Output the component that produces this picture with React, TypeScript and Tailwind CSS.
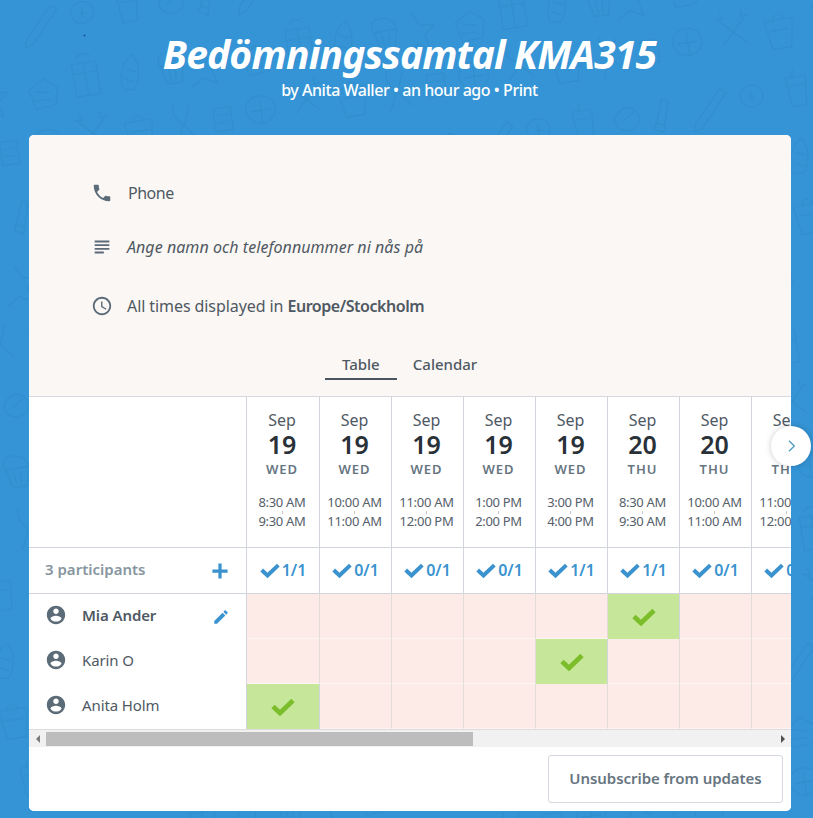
const font = { fontFamily: '"Noto Sans", "Open Sans", sans-serif' };

type Slot = { month: string; day: string; dow: string; from: string; to: string; count: string };

const slots: Slot[] = [
  { month: 'Sep', day: '19', dow: 'WED', from: '8:30 AM', to: '9:30 AM', count: '1/1' },
  { month: 'Sep', day: '19', dow: 'WED', from: '10:00 AM', to: '11:00 AM', count: '0/1' },
  { month: 'Sep', day: '19', dow: 'WED', from: '11:00 AM', to: '12:00 PM', count: '0/1' },
  { month: 'Sep', day: '19', dow: 'WED', from: '1:00 PM', to: '2:00 PM', count: '0/1' },
  { month: 'Sep', day: '19', dow: 'WED', from: '3:00 PM', to: '4:00 PM', count: '1/1' },
  { month: 'Sep', day: '20', dow: 'THU', from: '8:30 AM', to: '9:30 AM', count: '1/1' },
  { month: 'Sep', day: '20', dow: 'THU', from: '10:00 AM', to: '11:00 AM', count: '0/1' },
  { month: 'Sep', day: '20', dow: 'THU', from: '11:00 AM', to: '12:00 PM', count: '0/1' },
];

const participants = [
  { name: 'Mia Ander', yes: 5, me: true },
  { name: 'Karin O', yes: 4, me: false },
  { name: 'Anita Holm', yes: 0, me: false },
];

// the first slot column is one pixel wider than the rest
const colWidth = (i: number) => (i === 0 ? 'w-[73px]' : 'w-[72px]');

function Icon({ d, className }: { d: string; className: string }) {
  return (
    <svg viewBox="0 0 24 24" fill="currentColor" className={className}>
      <path d={d} />
    </svg>
  );
}

function Check({ className }: { className: string }) {
  return (
    <svg viewBox="0 0 24 18" fill="none" stroke="currentColor" strokeWidth="4.8" className={className}>
      <path d="M2 8.5l7 6.5L22 2.5" />
    </svg>
  );
}

// faint hand drawn doodles behind the page
function Doodles() {
  return (
    <svg className="absolute inset-0 w-full h-full" aria-hidden="true">
      <defs>
        <pattern id="doodles" width="300" height="260" patternUnits="userSpaceOnUse" patternTransform="rotate(-9) scale(0.72)">
          <g fill="none" stroke="#2c86c4" strokeWidth="1.5" strokeLinecap="round" strokeLinejoin="round" opacity="0.55">
            <path d="M28 60l40-42 8 7-40 43-12 4z" />
            <path d="M98 24c10-8 26-4 28 8s-10 20-20 18-16-18-8-26zM106 36h10M110 28v14" />
            <path d="M160 18h28l-4 40h-20zM164 30h20M172 8l-3 10" />
            <path d="M225 28c12-10 30 2 26 16-3 12-22 16-30 6s-3-16 4-22zM228 42l16-10" />
            <path d="M270 60l16-40 8 4-12 42zM274 52l10 4" />
            <path d="M20 130l22-12 18 14-6 24-28 2zM30 134l18 4M26 146l22 2" />
            <path d="M84 104h34v46H84zM84 118h34M101 104v46M92 96c4-6 14-6 18 0" />
            <path d="M150 150c-6-22 8-42 20-46 8 14 6 36-6 48zM158 122l12 6M154 136l12 6" />
            <path d="M208 110c14-6 30 2 30 16H204c-2-6 0-12 4-16zM206 126l6 26h20l6-26M216 132l2 16M226 132l-2 16" />
            <path d="M262 108l8 18 20 2-15 13 5 20-18-10-17 10" />
            <path d="M16 196c10-12 30-10 36 2s-2 28-18 28-26-18-18-30zM20 208h28M34 194v32" />
            <path d="M82 186l34 34M116 186l-34 34M76 182l10 2-2-10M122 182l-10 2 2-10" />
            <path d="M144 196h38v6l-6 34h-26l-6-34zM150 210h26M156 196c0-10 14-10 14 0" />
            <path d="M214 182c-4 14 4 22 10 30l-12 26M236 186l-10 26 16 22" />
            <path d="M268 196h24v32h-24zM272 206h16M272 216h16" />
          </g>
        </pattern>
      </defs>
      <rect width="100%" height="100%" fill="url(#doodles)" />
      <circle cx="84.5" cy="35.5" r="1" fill="#1f4f9a" />
    </svg>
  );
}

export default function App() {
  return (
    <div className="relative h-[818px] overflow-hidden bg-[#3494d5] text-[#4f5963]" style={font}>
      <Doodles />
      <div className="relative">
        <div className="h-[135px] pt-[29px] pl-[6px] text-center text-white">
          <h1 className="text-[39px] leading-[50px] font-bold italic tracking-[-0.85px]">Bedömningssamtal KMA315</h1>
          <p className="text-[16px] leading-[22px] font-medium tracking-[-0.46px]">
            by Anita Waller • an hour ago • Print
          </p>
        </div>

        <div className="relative ml-[29px] w-[762px] rounded-[5px] bg-white">
          <div className="h-[262px] rounded-t-[5px] bg-[#fbf7f4] border-b border-[#d8d9e0]">
            <div className="pl-[62px] pt-[46px] text-[16px]">
              <div className="flex items-center gap-[15px] h-[24px]">
                <Icon className="w-[22px] h-[22px] text-[#5b6b78]" d="M6.62 10.79c1.44 2.83 3.76 5.14 6.59 6.59l2.2-2.2c.27-.27.67-.36 1.02-.24 1.12.37 2.33.57 3.57.57.55 0 1 .45 1 1V20c0 .55-.45 1-1 1-9.39 0-17-7.61-17-17 0-.55.45-1 1-1h3.5c.55 0 1 .45 1 1 0 1.25.2 2.45.57 3.57.11.35.03.74-.25 1.02l-2.2 2.2z" />
                <span className="tracking-[-0.5px]">Phone</span>
              </div>
              <div className="mt-[30px] flex items-center gap-[14px] h-[24px]">
                <Icon className="w-[22px] h-[22px] text-[#5b6b78]" d="M14 17H4v2h10v-2zm6-8H4v2h16V9zM4 15h16v-2H4v2zM4 5v2h16V5H4z" />
                <span className="italic tracking-[0.05px]">Ange namn och telefonnummer ni nås på</span>
              </div>
              <div className="mt-[35px] flex items-center gap-[14px] h-[24px]">
                <Icon className="w-[22px] h-[22px] text-[#5b6b78]" d="M11.99 2C6.47 2 2 6.48 2 12s4.47 10 9.99 10C17.52 22 22 17.52 22 12S17.52 2 11.99 2zM12 20c-4.42 0-8-3.58-8-8s3.58-8 8-8 8 3.58 8 8-3.58 8-8 8zM12.5 7H11v6l5.25 3.15.75-1.23-4.5-2.67z" />
                <span className="tracking-[-0.08px]">
                  All times displayed in <b className="font-semibold tracking-[-0.45px]">Europe/Stockholm</b>
                </span>
              </div>
            </div>
            <div className="mt-[35px] flex justify-center text-[15px] font-medium pr-[18px]">
              <span className="w-[72px] h-[27px] text-center border-b-2 border-[#4a5560]">Table</span>
              <span className="ml-[16px]">Calendar</span>
            </div>
          </div>

          <div className="overflow-hidden">
            <div className="flex h-[150px] w-max">
              <div className="w-[218px] shrink-0 border-r border-[#d3d5dc]" />
              {slots.map((s, i) => (
                <div key={i} className={`${colWidth(i)} shrink-0 border-r border-[#d3d5dc] pt-[13px] pr-[2px] text-center`}>
                  <div className="text-[16px] leading-[20px] text-[#4f5963]">{s.month}</div>
                  <div className="-mt-[1px] mb-[1px] text-[25px] leading-[30px] font-semibold text-[#2a3138]">{s.day}</div>
                  <div className="text-[13px] leading-[18px] font-semibold tracking-[1px] text-[#66757f]">{s.dow}</div>
                  <div className="mt-[15px] text-[13px] leading-[19px] tracking-[-0.3px] text-[#55606a]">
                    <div>{s.from}</div>
                    <div className="mx-auto -my-[1.5px] h-[3px] w-px bg-[#c2c6ca]" />
                    <div>{s.to}</div>
                  </div>
                </div>
              ))}
            </div>

            <div className="flex h-[47px] w-max border-y border-[#d3d5dc]">
              <div className="w-[218px] shrink-0 border-r border-[#d3d5dc] pl-[16px] pr-[13px] flex items-center justify-between">
                <span className="-mt-[2px] text-[15px] font-semibold text-[#8796a0]">3 participants</span>
                <Icon className="w-[26px] h-[26px] text-[#3a93cf]" d="M19 13.5h-5.5V19h-3v-5.5H5v-3h5.5V5h3v5.5H19z" />
              </div>
              {slots.map((s, i) => (
                <div key={i} className={`${colWidth(i)} shrink-0 border-r border-[#d3d5dc] flex items-center justify-center gap-[2px] text-[#3a93cf]`}>
                  <Check className="w-[20px] h-[15px]" />
                  <span className="-mt-[2px] text-[16px] font-semibold">{s.count}</span>
                </div>
              ))}
            </div>

            {participants.map((p) => (
              <div key={p.name} className="flex h-[45px] w-max">
                <div className="w-[218px] shrink-0 border-r border-[#d3d5dc] pl-[16px] pr-[16px] flex items-center">
                  <Icon className="w-[22px] h-[22px] text-[#5b6b78] -mt-[3px]" d="M12 2C6.48 2 2 6.48 2 12s4.48 10 10 10 10-4.48 10-10S17.52 2 12 2zm0 3c1.66 0 3 1.34 3 3s-1.34 3-3 3-3-1.34-3-3 1.34-3 3-3zm0 14.2c-2.5 0-4.71-1.28-6-3.22.03-1.99 4-3.08 6-3.08 1.99 0 5.97 1.09 6 3.08-1.29 1.94-3.5 3.22-6 3.22z" />
                  <span className={`-mt-[2px] ml-[15px] text-[15px] tracking-[-0.1px] ${p.me ? 'font-semibold' : ''}`}>{p.name}</span>
                  {p.me && (
                    <Icon className="ml-auto w-[18px] h-[18px] text-[#3a93cf]" d="M3 17.25V21h3.75L17.81 9.94l-3.75-3.75L3 17.25zM20.71 7.04c.39-.39.39-1.02 0-1.41l-2.34-2.34c-.39-.39-1.02-.39-1.41 0l-1.83 1.83 3.75 3.75 1.83-1.83z" />
                  )}
                </div>
                {slots.map((s, i) =>
                  i === p.yes ? (
                    <div key={s.from + i} className={`${colWidth(i)} shrink-0 bg-[#c6e799] border-r border-[#d3d5dc] flex items-center justify-center text-[#7bbd2a]`}>
                      <Check className="w-[24px] h-[18px]" />
                    </div>
                  ) : (
                    <div key={s.from + i} className={`${colWidth(i)} shrink-0 bg-[#fcebe7] border-r border-b border-[#e3dbd8] border-b-[#fdf5f2]`} />
                  )
                )}
              </div>
            ))}
          </div>

          <div className="flex h-[18px] items-center bg-[#f1f1f1] border-t border-[#dcdcdc]">
            <div className="w-[17px] flex justify-center">
              <span className="border-y-[4px] border-r-[4px] border-y-transparent border-r-[#7b7b7b]" />
            </div>
            <div className="h-[14px] w-[427px] bg-[#bdbdbd]" />
            <div className="ml-auto w-[17px] flex justify-center">
              <span className="border-y-[4px] border-l-[4px] border-y-transparent border-l-[#505050]" />
            </div>
          </div>

          <div className="h-[64px] rounded-b-[5px] bg-white flex justify-end items-start pt-[8px] pr-[8px]">
            <button className="h-[48px] w-[235px] rounded-[3px] border border-[#d3d9de] pb-[2px] text-[15px] font-semibold tracking-[-0.05px] text-[#67757f]">
              Unsubscribe from updates
            </button>
          </div>

          <button className="absolute left-[742px] top-[291px] flex h-[40px] w-[40px] items-center justify-center rounded-full bg-white shadow-[0_0_6px_rgba(0,0,0,0.2)]">
            <svg viewBox="0 0 24 24" fill="none" stroke="#4f9cc0" strokeWidth="2" className="h-[16px] w-[16px]">
              <path d="M9 4l8 8-8 8" />
            </svg>
          </button>
        </div>
      </div>
    </div>
  );
}
